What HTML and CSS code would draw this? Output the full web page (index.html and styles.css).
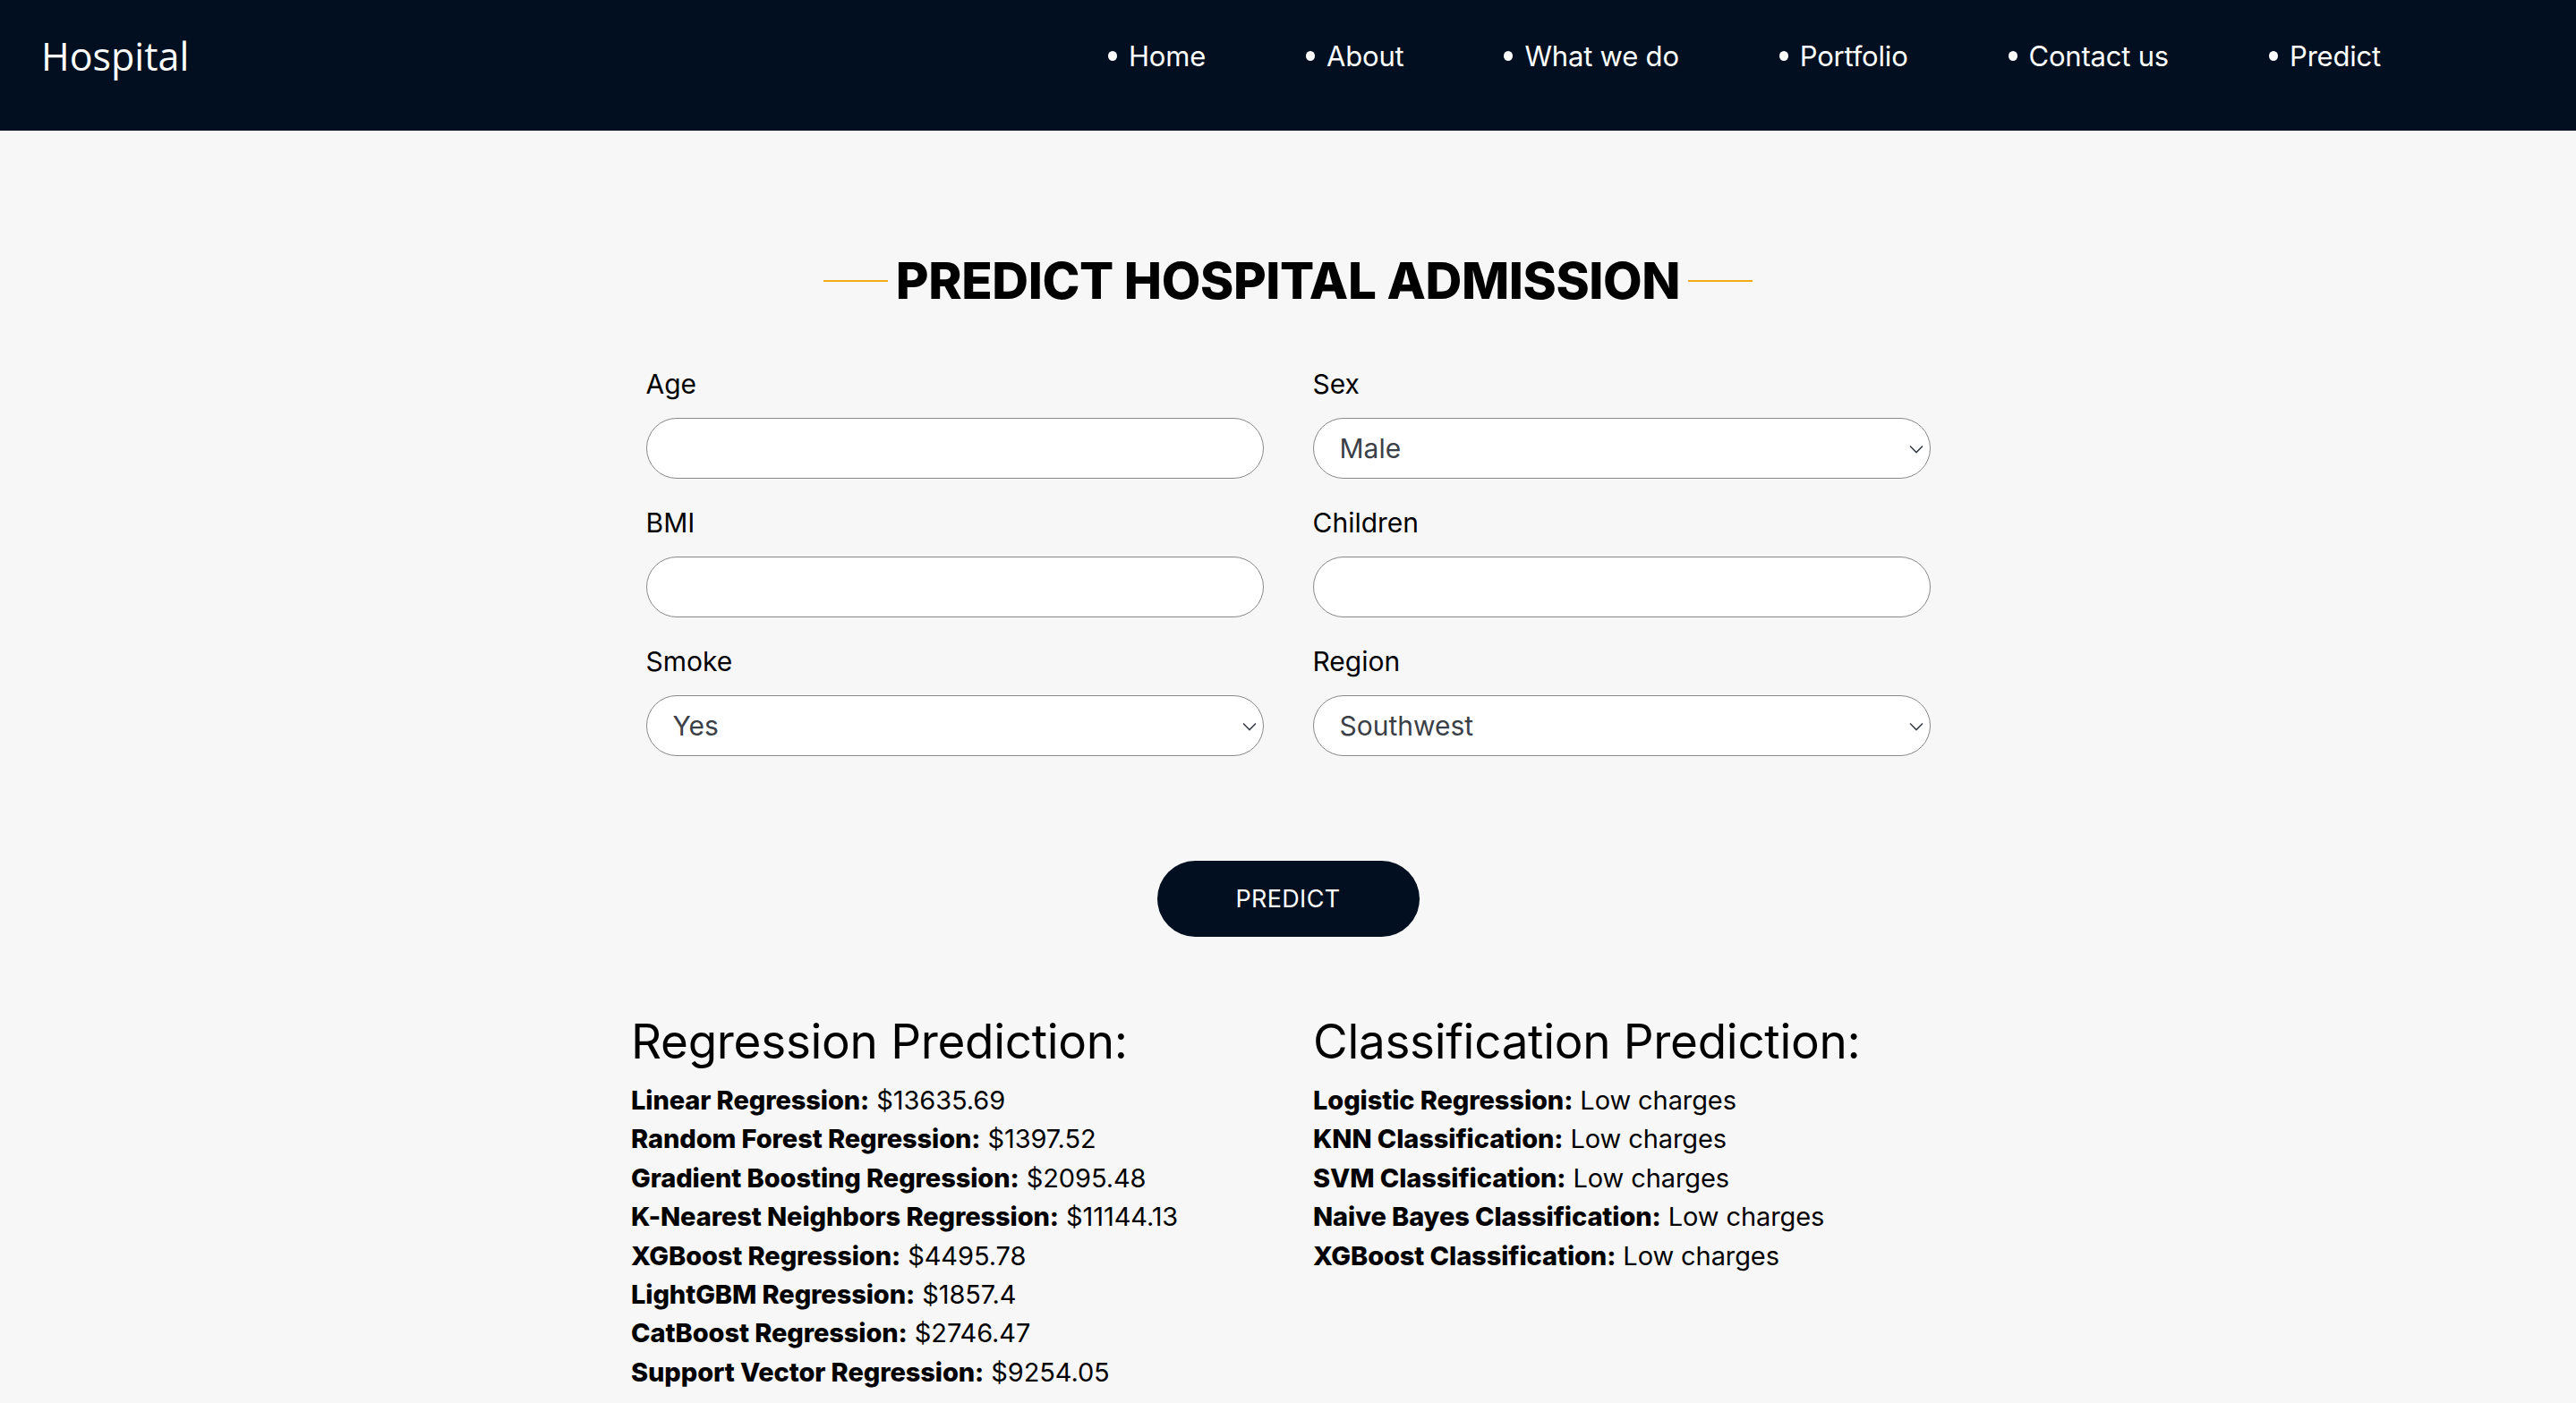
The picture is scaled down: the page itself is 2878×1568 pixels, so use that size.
FILE: index.html
```html
<!DOCTYPE html>
<html lang="en">
<head>
<meta charset="utf-8">
<title>Hospital</title>
<link rel="stylesheet" href="styles.css">
</head>
<body>
<header class="topbar">
  <div class="brand">Hospital</div>
  <nav class="nav">
    <a class="nav-item" href="#">Home</a>
    <a class="nav-item" href="#">About</a>
    <a class="nav-item" href="#">What we do</a>
    <a class="nav-item" href="#">Portfolio</a>
    <a class="nav-item" href="#">Contact us</a>
    <a class="nav-item" href="#">Predict</a>
  </nav>
</header>

<main class="main">
  <h1 class="title"><span class="title-line"></span><span class="title-text">PREDICT HOSPITAL ADMISSION</span><span class="title-line"></span></h1>

  <form class="form">
    <div class="field">
      <label class="label">Age</label>
      <input class="control" type="text">
    </div>
    <div class="field">
      <label class="label">Sex</label>
      <div class="select-wrap">
        <select class="control select"><option>Male</option><option>Female</option></select>
        <svg class="chev" viewBox="0 0 16 10" width="16" height="10"><path d="M1 1.5 L8 8.5 L15 1.5" fill="none" stroke="#3b3f47" stroke-width="1.6"/></svg>
      </div>
    </div>
    <div class="field">
      <label class="label">BMI</label>
      <input class="control" type="text">
    </div>
    <div class="field">
      <label class="label">Children</label>
      <input class="control" type="text">
    </div>
    <div class="field">
      <label class="label">Smoke</label>
      <div class="select-wrap">
        <select class="control select"><option>Yes</option><option>No</option></select>
        <svg class="chev" viewBox="0 0 16 10" width="16" height="10"><path d="M1 1.5 L8 8.5 L15 1.5" fill="none" stroke="#3b3f47" stroke-width="1.6"/></svg>
      </div>
    </div>
    <div class="field">
      <label class="label">Region</label>
      <div class="select-wrap">
        <select class="control select"><option>Southwest</option><option>Southeast</option><option>Northwest</option><option>Northeast</option></select>
        <svg class="chev" viewBox="0 0 16 10" width="16" height="10"><path d="M1 1.5 L8 8.5 L15 1.5" fill="none" stroke="#3b3f47" stroke-width="1.6"/></svg>
      </div>
    </div>
  </form>

  <div class="actions">
    <button class="btn" type="button">PREDICT</button>
  </div>

  <section class="results">
    <div class="result-col">
      <h2 class="result-title">Regression Prediction:</h2>
      <p class="line"><b>Linear Regression:</b> $13635.69</p>
      <p class="line"><b>Random Forest Regression:</b> $1397.52</p>
      <p class="line"><b>Gradient Boosting Regression:</b> $2095.48</p>
      <p class="line"><b>K-Nearest Neighbors Regression:</b> $11144.13</p>
      <p class="line"><b>XGBoost Regression:</b> $4495.78</p>
      <p class="line"><b>LightGBM Regression:</b> $1857.4</p>
      <p class="line"><b>CatBoost Regression:</b> $2746.47</p>
      <p class="line"><b>Support Vector Regression:</b> $9254.05</p>
    </div>
    <div class="result-col">
      <h2 class="result-title">Classification Prediction:</h2>
      <p class="line"><b>Logistic Regression:</b> Low charges</p>
      <p class="line"><b>KNN Classification:</b> Low charges</p>
      <p class="line"><b>SVM Classification:</b> Low charges</p>
      <p class="line"><b>Naive Bayes Classification:</b> Low charges</p>
      <p class="line"><b>XGBoost Classification:</b> Low charges</p>
    </div>
  </section>
</main>
</body>
</html>
```

FILE: styles.css
```css
* { box-sizing: border-box; }

html, body {
  margin: 0;
  padding: 0;
}

body {
  background: #f7f7f7;
  font-family: Inter, "Open Sans", "Liberation Sans", sans-serif;
  color: #000;
  min-height: 1568px;
}

.topbar {
  height: 146px;
  background: #010f20;
  display: flex;
  align-items: center;
  padding: 0 218px 21px 46px;
}

.brand {
  font-family: "Open Sans", sans-serif;
  font-size: 43px;
  color: #fff;
  line-height: 1;
}

.nav {
  margin-left: auto;
  display: flex;
  align-items: center;
  gap: 112px;
}

.nav-item {
  display: flex;
  align-items: center;
  gap: 13px;
  color: #fff;
  text-decoration: none;
  font-size: 31px;
  letter-spacing: -0.2px;
}

.nav-item::before {
  content: "";
  width: 10px;
  height: 11px;
  border-radius: 50%;
  background: #fff;
}

.main {
  padding-top: 132px;
}

.title {
  margin: 0 0 58px;
  display: flex;
  align-items: center;
  justify-content: center;
  gap: 9px;
  font-size: 56.5px;
  line-height: 72px;
  font-weight: 800;
  letter-spacing: -0.4px;
}

.title-line {
  width: 72px;
  height: 2px;
  background: #f0ab16;
}

.form {
  width: 1435px;
  margin: 0 auto;
  display: grid;
  grid-template-columns: 690px 690px;
  column-gap: 55px;
  row-gap: 28px;
}

.field {
  display: flex;
  flex-direction: column;
}

.label {
  font-size: 30px;
  line-height: 42px;
  margin-bottom: 17px;
  color: #000;
}

.control {
  width: 100%;
  height: 68px;
  border: 1px solid #888;
  border-radius: 34px;
  background: #fff;
  font-family: inherit;
  font-size: 30px;
  color: #3b3f47;
  padding: 0 29px;
  outline: none;
}

.select-wrap {
  position: relative;
}

.select {
  appearance: none;
  -webkit-appearance: none;
}

.chev {
  position: absolute;
  right: 8px;
  top: 30px;
  pointer-events: none;
}

.actions {
  display: flex;
  justify-content: center;
  margin-top: 117px;
}

.btn {
  width: 293px;
  height: 85px;
  border: none;
  border-radius: 43px;
  background: #010f20;
  color: #fff;
  font-family: inherit;
  font-size: 27px;
  letter-spacing: 0.3px;
}

.results {
  display: grid;
  grid-template-columns: 762px 1fr;
  padding-left: 705px;
  margin-top: 87px;
}

.result-title {
  margin: 0 0 14px;
  font-size: 53px;
  line-height: 60px;
  font-weight: 400;
  letter-spacing: -0.3px;
}

.line {
  margin: 0;
  font-size: 29px;
  line-height: 43.4px;
  letter-spacing: -0.1px;
}

.line b {
  font-weight: 800;
}
```
